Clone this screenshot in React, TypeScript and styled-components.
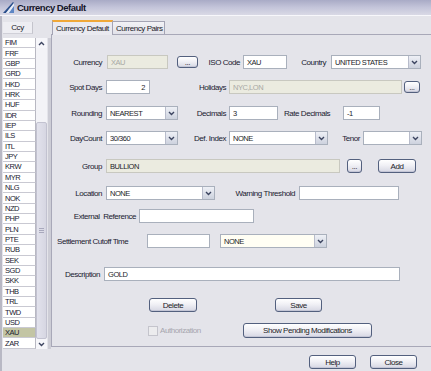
import React from "react";
import styled, { createGlobalStyle, css } from "styled-components";

const Global = createGlobalStyle`
  html, body { margin: 0; padding: 0; background: #e4e4ea; }
  #root { width: 431px; height: 371px; }
`;

const FONT = `"Liberation Sans", Arial, sans-serif`;

const Window = styled.div`
  width: 431px;
  height: 371px;
  overflow: hidden;
  background: #e4e4ea;
  display: flex;
  flex-direction: column;
  font-family: ${FONT};
  font-size: 8px;
  letter-spacing: -0.45px;
  color: #1c1c28;
`;

const TitleBar = styled.div`
  height: 15px;
  flex: none;
  display: flex;
  align-items: center;
  gap: 3px;
  padding-left: 3px;
  background: linear-gradient(#a9abc6, #c4c5da 50%, #d9d9e5);
  border-bottom: 1px solid #f7f7fb;
`;

const TitleText = styled.span`
  font-size: 9.5px;
  font-weight: bold;
  letter-spacing: -0.5px;
  color: #16162a;
`;

const Main = styled.div`
  flex: 1;
  display: flex;
  min-height: 0;
`;

const ListPanel = styled.div`
  width: 51px;
  flex: none;
  box-sizing: border-box;
  border-left: 2px solid #b8b8c4;
  padding-left: 1px;
  padding-top: 6px;
  display: flex;
  flex-direction: column;
`;

const ListHeader = styled.div`
  width: 30px;
  height: 12px;
  box-sizing: border-box;
  background: #eeeef3;
  border-right: 1px solid #c4c4cc;
  border-bottom: 1px solid #d0d0d8;
  display: flex;
  align-items: center;
  justify-content: center;
`;

const ListBody = styled.div`
  margin-top: 4px;
  height: 311px;
  display: flex;
  border-right: 3px solid #cdcdd6;
  width: 45px;
`;

const Cells = styled.div`
  width: 33px;
  display: flex;
  flex-direction: column;
`;

const Cell = styled.div<{ $sel?: boolean }>`
  flex: 1;
  box-sizing: border-box;
  background: ${(p) => (p.$sel ? "#c3c5a4" : "#ffffff")};
  border-bottom: 1px solid #c9c9d2;
  border-right: 1px solid #b8b8c2;
  padding-left: 2px;
  font-size: 7.5px;
  display: flex;
  align-items: center;
  color: #202030;
`;

const ScrollBar = styled.div`
  width: 11px;
  display: flex;
  flex-direction: column;
  background: #f3f3f7;
`;

const ScrollBtn = styled.div`
  height: 10px;
  flex: none;
  display: flex;
  align-items: center;
  justify-content: center;
  background: #f6f6fa;
`;

const ScrollGap = styled.div`
  height: 74px;
  flex: none;
`;

const Thumb = styled.div`
  flex: 1;
  background: linear-gradient(90deg, #e2e2ec, #d6d6e2);
  border: 1px solid #c2c2d0;
  border-radius: 2px;
  display: flex;
  flex-direction: column;
  align-items: center;
  justify-content: center;
  gap: 1px;
`;

const Grip = styled.div`
  width: 5px;
  height: 1px;
  background: #a8a8bc;
`;

const RightCol = styled.div`
  flex: 1;
  display: flex;
  flex-direction: column;
  min-width: 0;
`;

const TabStrip = styled.div`
  height: 18px;
  flex: none;
  display: flex;
  align-items: flex-end;
  padding-left: 1px;
`;

const Tab = styled.div<{ $active?: boolean }>`
  box-sizing: border-box;
  height: ${(p) => (p.$active ? 15 : 13)}px;
  padding: 0 3px;
  display: flex;
  align-items: center;
  white-space: nowrap;
  overflow: hidden;
  border: 1px solid #a4a4b4;
  border-bottom: none;
  margin-bottom: ${(p) => (p.$active ? -1 : 0)}px;
  position: relative;
  z-index: ${(p) => (p.$active ? 1 : 0)};
  ${(p) =>
    p.$active
      ? css`
          background: #eaeaf0;
          border-top: 2px solid #f0a838;
          width: 61px;
        `
      : css`
          background: linear-gradient(#f2f2f6, #e2e2ea);
          width: 53px;
          margin-left: -1px;
        `}
`;

const Panel = styled.div`
  box-sizing: border-box;
  height: 313px;
  margin-right: -6px;
  border: 1px solid #a8a8b8;
  background: #e4e4ea;
  display: flex;
  flex-direction: column;
`;

const Row = styled.div<{ $mt: number; $h?: number }>`
  display: flex;
  align-items: center;
  height: ${(p) => p.$h ?? 14}px;
  margin-top: ${(p) => p.$mt}px;
  flex: none;
`;

const Label = styled.div<{ $w: number; $ml?: number; $left?: boolean }>`
  width: ${(p) => p.$w}px;
  margin-left: ${(p) => p.$ml ?? 0}px;
  flex: none;
  text-align: ${(p) => (p.$left ? "left" : "right")};
  white-space: pre;
  color: #202030;
`;

const TextBox = styled.div<{
  $w: number;
  $ml?: number;
  $disabled?: boolean;
  $dim?: boolean;
  $right?: boolean;
}>`
  width: ${(p) => p.$w}px;
  margin-left: ${(p) => p.$ml ?? 0}px;
  height: 14px;
  flex: none;
  box-sizing: border-box;
  border: 1px solid ${(p) => (p.$disabled ? "#c8c8c0" : "#a9b0bc")};
  background: ${(p) => (p.$disabled ? "#ebebe0" : "#ffffff")};
  color: ${(p) => (p.$dim ? "#a8a8a4" : "#1c1c28")};
  display: flex;
  align-items: center;
  justify-content: ${(p) => (p.$right ? "flex-end" : "flex-start")};
  padding: 0 4px 0 3px;
  font-size: 7.5px;
`;

const ComboBox = styled.div<{ $w: number; $ml?: number; $cream?: boolean }>`
  width: ${(p) => p.$w}px;
  margin-left: ${(p) => p.$ml ?? 0}px;
  height: 14px;
  flex: none;
  box-sizing: border-box;
  border: 1px solid #a9b0bc;
  background: ${(p) => (p.$cream ? "#fffef4" : "#ffffff")};
  display: flex;
  align-items: stretch;
  font-size: 7.5px;
`;

const ComboText = styled.div`
  flex: 1;
  display: flex;
  align-items: center;
  padding-left: 3px;
  overflow: hidden;
  white-space: nowrap;
`;

const ComboArrow = styled.div`
  width: 11px;
  flex: none;
  display: flex;
  align-items: center;
  justify-content: center;
  background: linear-gradient(#eef0f6, #cdd2de);
  border-left: 1px solid #b8bccb;
`;

const Btn = styled.div<{ $w: number; $ml?: number; $h?: number }>`
  width: ${(p) => p.$w}px;
  margin-left: ${(p) => p.$ml ?? 0}px;
  height: ${(p) => p.$h ?? 14}px;
  flex: none;
  box-sizing: border-box;
  border: 1px solid #53607e;
  border-radius: 3px;
  background: linear-gradient(#ffffff, #f0f0f5 45%, #d6d7e3);
  box-shadow: inset 0 -1px 0 #c4c6d6;
  display: flex;
  align-items: center;
  justify-content: center;
  color: #1c1c28;
  white-space: nowrap;
`;

const CheckGroup = styled.div<{ $w: number; $ml: number }>`
  width: ${(p) => p.$w}px;
  margin-left: ${(p) => p.$ml}px;
  flex: none;
  display: flex;
  align-items: center;
  gap: 2px;
  color: #a6a6ae;
`;

const CheckBox = styled.div`
  width: 10px;
  height: 10px;
  box-sizing: border-box;
  border: 1px solid #c4c4cc;
  background: #ececee;
`;

const Footer = styled.div`
  flex: 1;
  display: flex;
  justify-content: flex-end;
  align-items: flex-start;
  padding-top: 8px;
  padding-right: 14px;
  gap: 14px;
`;

const Chevron = ({ up }: { up?: boolean }) => (
  <svg width="7" height="5" viewBox="0 0 7 5">
    <path
      d={up ? "M1 4 L3.5 1.5 L6 4" : "M1 1 L3.5 3.5 L6 1"}
      fill="none"
      stroke="#3c4460"
      strokeWidth="1.4"
    />
  </svg>
);

const AppIcon = () => (
  <svg width="11" height="11" viewBox="0 0 11 11">
    <polygon points="0,11 10,0 11,1 3,11" fill="#2a4f8c" />
    <polygon points="3,11 11,1 11,4 6,11" fill="#e8eef8" />
    <polygon points="6,11 11,4 11,11" fill="#5d86c4" />
  </svg>
);

const Combo = ({
  w,
  ml,
  value,
  cream,
}: {
  w: number;
  ml?: number;
  value?: string;
  cream?: boolean;
}) => (
  <ComboBox $w={w} $ml={ml} $cream={cream}>
    <ComboText>{value}</ComboText>
    <ComboArrow>
      <Chevron />
    </ComboArrow>
  </ComboBox>
);

const currencies = [
  "FIM", "FRF", "GBP", "GRD", "HKD", "HRK", "HUF", "IDR", "IEP", "ILS",
  "ITL", "JPY", "KRW", "MYR", "NLG", "NOK", "NZD", "PHP", "PLN", "PTE",
  "RUB", "SEK", "SGD", "SKK", "THB", "TRL", "TWD", "USD", "XAU", "ZAR",
];

export default function App() {
  return (
    <>
      <Global />
      <Window>
        <TitleBar>
          <AppIcon />
          <TitleText>Currency Default</TitleText>
        </TitleBar>
        <Main>
          <ListPanel>
            <ListHeader>Ccy</ListHeader>
            <ListBody>
              <Cells>
                {currencies.map((c) => (
                  <Cell key={c} $sel={c === "XAU"}>
                    {c}
                  </Cell>
                ))}
              </Cells>
              <ScrollBar>
                <ScrollBtn>
                  <Chevron up />
                </ScrollBtn>
                <ScrollGap />
                <Thumb>
                  <Grip />
                  <Grip />
                  <Grip />
                </Thumb>
                <ScrollBtn>
                  <Chevron />
                </ScrollBtn>
              </ScrollBar>
            </ListBody>
          </ListPanel>
          <RightCol>
            <TabStrip>
              <Tab $active>Currency Default</Tab>
              <Tab>Currency Pairs</Tab>
            </TabStrip>
            <Panel>
              <Row $mt={20}>
                <Label $w={50}>Currency</Label>
                <TextBox $w={61} $ml={5} $disabled $dim>XAU</TextBox>
                <Btn $w={21} $ml={9} $h={12}>...</Btn>
                <Label $w={42}>ISO Code</Label>
                <TextBox $w={44} $ml={3}>XAU</TextBox>
                <Label $w={39}>Country</Label>
                <Combo w={90} ml={5} value="UNITED STATES" />
              </Row>
              <Row $mt={11}>
                <Label $w={50}>Spot Days</Label>
                <TextBox $w={44} $ml={4} $right>2</TextBox>
                <Label $w={76}>Holidays</Label>
                <TextBox $w={173} $ml={3} $disabled $dim>NYC,LON</TextBox>
                <Btn $w={16} $ml={2} $h={12}>...</Btn>
              </Row>
              <Row $mt={12}>
                <Label $w={50}>Rounding</Label>
                <Combo w={72} ml={4} value="NEAREST" />
                <Label $w={48}>Decimals</Label>
                <TextBox $w={49} $ml={3}>3</TextBox>
                <Label $w={50} $ml={6} $left>Rate Decimals</Label>
                <TextBox $w={37} $ml={9}>-1</TextBox>
              </Row>
              <Row $mt={11}>
                <Label $w={50}>DayCount</Label>
                <Combo w={72} ml={4} value="30/360" />
                <Label $w={48}>Def. Index</Label>
                <Combo w={99} ml={3} value="NONE" />
                <Label $w={32}>Tenor</Label>
                <Combo w={59} ml={3} />
              </Row>
              <Row $mt={14}>
                <Label $w={50}>Group</Label>
                <TextBox $w={234} $ml={4} $disabled>BULLION</TextBox>
                <Btn $w={15} $ml={7}>...</Btn>
                <Btn $w={38} $ml={16}>Add</Btn>
              </Row>
              <Row $mt={13}>
                <Label $w={50}>Location</Label>
                <Combo w={109} ml={4} value="NONE" />
                <Label $w={80}>Warning Threshold</Label>
                <TextBox $w={100} $ml={4} />
              </Row>
              <Row $mt={9}>
                <Label $w={84}>{"External  Reference"}</Label>
                <TextBox $w={115} $ml={3} />
              </Row>
              <Row $mt={11}>
                <Label $w={80} $ml={5} $left>Settlement Cutoff Time</Label>
                <TextBox $w={63} $ml={10} />
                <Combo w={107} ml={10} value="NONE" cream />
              </Row>
              <Row $mt={19}>
                <Label $w={48}>Description</Label>
                <TextBox $w={296} $ml={4}>GOLD</TextBox>
              </Row>
              <Row $mt={17}>
                <Btn $w={48} $ml={97}>Delete</Btn>
                <Btn $w={47} $ml={78}>Save</Btn>
              </Row>
              <Row $mt={11} $h={15}>
                <CheckGroup $w={95} $ml={96}>
                  <CheckBox />
                  Authorization
                </CheckGroup>
                <Btn $w={129} $h={15}>Show Pending Modifications</Btn>
              </Row>
            </Panel>
            <Footer>
              <Btn $w={47}>Help</Btn>
              <Btn $w={47}>Close</Btn>
            </Footer>
          </RightCol>
        </Main>
      </Window>
    </>
  );
}
